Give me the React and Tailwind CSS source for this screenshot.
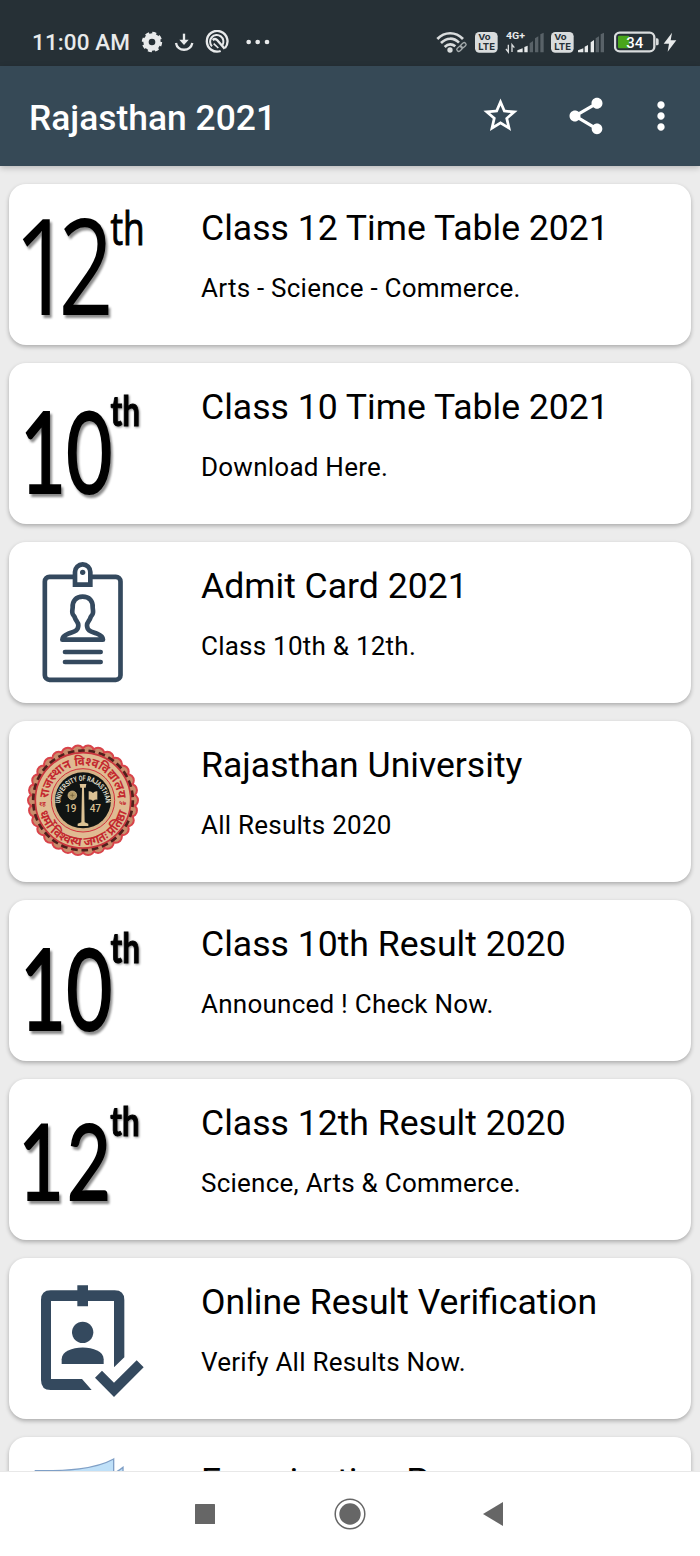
import React from 'react';
import { MdMoreVert, MdShare, MdStarBorder } from 'react-icons/md';

const Glyph = ({ x, y, sx, size, children, font = 'Lato', weight = 400, stroke = 0 }) => (
    <text
        transform={`translate(${x} ${y}) scale(${sx} 1)`}
        fontFamily={`${font}, sans-serif`}
        fontSize={size}
        fontWeight={weight}
        stroke="#000"
        strokeWidth={stroke}
    >
        {children}
    </text>
);

const TwelfthThin = () => (
    <svg viewBox="0 0 150 161" className="w-[150px] h-[161px] shrink-0">
        <g className="drop-shadow-[2px_3px_1px_rgba(0,0,0,0.45)]">
            <Glyph x={4.5} y={131} sx={0.77} size={134} font="Open Sans">1</Glyph>
            <Glyph x={49.6} y={131} sx={0.72} size={134} font="Open Sans">2</Glyph>
        </g>
        <Glyph x={101.4} y={60.5} sx={0.76} size={46.5} font="Open Sans" stroke={1}>th</Glyph>
    </svg>
);

const Tenth = () => (
    <svg viewBox="0 0 150 161" className="w-[150px] h-[161px] shrink-0">
        <g className="drop-shadow-[2px_3px_1px_rgba(0,0,0,0.45)]">
            <Glyph x={11} y={130} sx={0.71} size={112} stroke={2}>1</Glyph>
            <Glyph x={57.2} y={130} sx={0.71} size={112} stroke={2}>0</Glyph>
        </g>
        <g className="drop-shadow-[1px_1px_1px_rgba(0,0,0,0.45)]">
            <Glyph x={101.5} y={63} sx={0.74} size={42.5} weight={700} stroke={1}>th</Glyph>
        </g>
    </svg>
);

const TwelfthBold = () => (
    <svg viewBox="0 0 150 161" className="w-[150px] h-[161px] shrink-0">
        <g className="drop-shadow-[2px_3px_1px_rgba(0,0,0,0.45)]">
            <Glyph x={9.3} y={121} sx={0.75} size={105} stroke={2}>1</Glyph>
            <Glyph x={58} y={121} sx={0.72} size={105} stroke={2}>2</Glyph>
        </g>
        <g className="drop-shadow-[1px_1px_1px_rgba(0,0,0,0.45)]">
            <Glyph x={101.3} y={57} sx={0.77} size={40.5} weight={700} stroke={1}>th</Glyph>
        </g>
    </svg>
);

const AdmitCard = () => (
    <svg viewBox="27 6 450 483" className="w-[150px] h-[161px] shrink-0" fill="none" stroke="#34495e" strokeWidth="14" strokeLinejoin="round" strokeLinecap="round">
        <rect x="134.5" y="110.5" width="227" height="309" rx="14" />
        <path d="M225 134V96a23 23 0 0 1 46 0v38z" fill="#fff" strokeLinejoin="miter" />
        <circle cx="248" cy="97" r="8" fill="#34495e" stroke="none" />
        <path d="M248 170c-20 0-31 13-30 32 0 6-2 8-1 16 1 8 6 9 8 16 2 8 10 12 10 22 0 18-14 19-30 25-12 5-18 9-18 18h122c0-9-6-13-18-18-16-6-30-7-30-25 0-10 8-14 10-22 2-7 7-8 8-16 1-8-1-10-1-16 1-19-10-32-30-32z" />
        <path d="M195 336h107M195 366h107" />
    </svg>
);

const VerifyCard = () => (
    <svg viewBox="27 -6 450 483" className="w-[150px] h-[161px] shrink-0" fill="#34495e">
        <path d="M152 91H232V76H264V91H344Q373 91 373 120V292L342 322V123H264V139H232V123H153V357H246L275 390H152Q123 390 123 360V120Q123 91 152 91Z" />
        <circle cx="248" cy="217" r="32" />
        <path d="M185 312V298C185 251 311 251 311 298V312Z" />
        <path d="M285 353L306 332L342 368L410 301L431 322L342 411Z" />
    </svg>
);

const petals = Array.from({ length: 30 }, (_, i) => (i * Math.PI) / 15);

const Seal = () => (
    <svg viewBox="-17 -42 450 483" className="w-[150px] h-[161px] shrink-0">
        <defs>
            <path id="seal-top" d="M101 196A104 104 0 0 1 309 196" />
            <path id="seal-bottom" d="M70 198A135 135 0 0 0 340 198" />
            <path id="seal-name" d="M137 205A68 68 0 0 1 273 205" />
        </defs>
        {petals.map((a, i) => (
            <circle key={i} cx={205 + 146 * Math.cos(a)} cy={196 + 146 * Math.sin(a)} r="19" fill="#c98d6c" stroke="#d9434a" strokeWidth="6" />
        ))}
        <circle cx="205" cy="196" r="149" fill="none" stroke="#4f211c" strokeWidth="9" strokeDasharray="20 11.2" />
        <circle cx="205" cy="196" r="143" fill="#e0bb92" stroke="#c9363e" strokeWidth="5" />
        <circle cx="205" cy="196" r="95" fill="#d6b286" stroke="#d3303c" strokeWidth="3" />
        <circle cx="205" cy="196" r="84" fill="#101413" />
        <g fill="#c4282f" fontFamily='"Noto Sans", "Noto Sans Devanagari", sans-serif' fontWeight="700" fontSize="38">
            <text><textPath href="#seal-top" startOffset="6" textLength="315" lengthAdjust="spacingAndGlyphs">राजस्थान विश्वविद्यालय</textPath></text>
            <text><textPath href="#seal-bottom" startOffset="34" textLength="356" lengthAdjust="spacingAndGlyphs">धर्मो विश्वस्य जगतः प्रतिष्ठा</textPath></text>
            <text x="73" y="214" fontSize="18">१ह</text>
            <text x="314" y="210" fontSize="18">५७</text>
        </g>
        <text fill="#e8e2d4" fontFamily="Roboto, sans-serif" fontWeight="700" fontSize="22">
            <textPath href="#seal-name" textLength="212" lengthAdjust="spacingAndGlyphs">UNIVERSITY OF RAJASTHAN</textPath>
        </text>
        <g fill="#dcc294">
            <path d="M195 147h20l-2 11h-5l2 104 11 4v7h-32v-7l11-4 2-104h-5z" />
            <circle cx="173" cy="181" r="13" fill="#b39c67" stroke="#dcc294" strokeWidth="2" />
            <path d="M167 181h12M173 175v12" stroke="#6c5b38" strokeWidth="2" />
            <path d="M222 169q7-2 13 5 6-7 13-5v25q-7-1-13 4-6-5-13-4z" />
            <g fontFamily="Roboto, sans-serif" fontSize="30" fontWeight="500">
                <text x="151" y="230">19</text>
                <text x="225" y="230">47</text>
            </g>
        </g>
    </svg>
);

const Papers = () => (
    <svg viewBox="27 81 450 483" className="w-[150px] h-[161px] shrink-0" fill="#bfe0f8" stroke="#7f9fc6" strokeWidth="4">
        <path d="M340 190Q356 183 369 172V300H330z" />
        <path d="M106 182C200 183 285 178 341 147V300H106z" />
    </svg>
);

const items = [
    { title: 'Class 12 Time Table 2021', text: 'Arts - Science - Commerce.', Icon: TwelfthThin },
    { title: 'Class 10 Time Table 2021', text: 'Download Here.', Icon: Tenth },
    { title: 'Admit Card 2021', text: 'Class 10th & 12th.', Icon: AdmitCard },
    { title: 'Rajasthan University', text: 'All Results 2020', Icon: Seal },
    { title: 'Class 10th Result 2020', text: 'Announced ! Check Now.', Icon: Tenth },
    { title: 'Class 12th Result 2020', text: 'Science, Arts & Commerce.', Icon: TwelfthBold },
    { title: 'Online Result Verification', text: 'Verify All Results Now.', Icon: VerifyCard },
    { title: 'Examination Paper', text: '', Icon: Papers },
];

const Volte = () => (
    <svg viewBox="0 92 69 69" className="w-[23px] h-[23px]">
        <rect x="0" y="95" width="68" height="62" rx="13" fill="#d9dcdd" />
        <g fill="#263036" fontFamily="Inter, sans-serif" fontWeight="700">
            <text x="10" y="120" fontSize="24" textLength="37" lengthAdjust="spacingAndGlyphs">Vo</text>
            <text x="10" y="148" fontSize="28" textLength="50" lengthAdjust="spacingAndGlyphs">LTE</text>
        </g>
    </svg>
);

const StatusBar = () => (
    <div className="h-[66px] shrink-0 bg-[#263036] flex items-center justify-between pl-[32px] pr-[23px] pt-[18px] text-[#e8eaeb]">
        <div className="flex items-center">
            <span className="w-[109px] text-[22.5px] leading-[24px] font-medium tracking-[0.1px]">11:00 AM</span>
            <svg viewBox="423 92 66 66" className="w-[22px] h-[22px]">
                <circle cx="456" cy="125" r="18" fill="none" stroke="#e8eaeb" strokeWidth="16" />
                <circle cx="456" cy="125" r="27" fill="none" stroke="#e8eaeb" strokeWidth="7" strokeDasharray="12 9.2" />
            </svg>
            <svg viewBox="522 92 60 66" className="ml-[11px] w-[20px] h-[22px]" fill="none" stroke="#e8eaeb" strokeWidth="7">
                <path d="M552 100v24" />
                <path d="M538 118h28l-14 16z" fill="#e8eaeb" stroke="none" />
                <path d="M528 128c4 27 44 27 49 0" />
            </svg>
            <svg viewBox="615 90 72 72" className="ml-[11px] w-[24px] h-[24px]" fill="none" stroke="#e8eaeb" strokeWidth="6">
                <path d="M675 144A31 31 0 1 0 662 153" strokeWidth="7" />
                <path d="M636 139a20 20 0 1 1 31-3" />
                <path d="M638 120q8-6 14 1l22 25" strokeWidth="7" />
                <path d="M641 131l14 13" strokeWidth="5" />
            </svg>
            <svg viewBox="735 92 78 66" className="ml-[16px] w-[26px] h-[22px]" fill="#e8eaeb">
                <circle cx="746" cy="125" r="7" />
                <circle cx="773" cy="125" r="7" />
                <circle cx="801" cy="125" r="7" />
            </svg>
        </div>
        <div className="flex items-center">
            <svg viewBox="48 92 96 69" className="w-[32px] h-[23px]" fill="none" stroke="#d9dcdd" strokeWidth="8">
                <path d="M52 116C74 93 107 93 129 116M63 128C80 111 101 111 117 127M74 140C84 130 96 130 106 138" />
                <circle cx="90" cy="149" r="8" fill="#d9dcdd" stroke="none" />
                <g stroke="#a3a9ab" strokeWidth="4" transform="rotate(-42 125 140)">
                    <rect x="108" y="134" width="18" height="11" rx="5" />
                    <rect x="123" y="134" width="18" height="11" rx="5" />
                </g>
            </svg>
            <div className="ml-[7px]"><Volte /></div>
            <svg viewBox="255 89 120 69" className="ml-[7px] w-[40px] h-[23px]">
                <text x="258" y="112" fill="#e8eaeb" fontFamily="Roboto, sans-serif" fontWeight="700" fontSize="29" textLength="57" lengthAdjust="spacingAndGlyphs">4G+</text>
                <path d="M265 130v22l-7-9M276 152v-22l7 9" fill="none" stroke="#d9dcdd" strokeWidth="4" />
                <path d="M292 147l16-6v12h-16zM313 137l10-4v20h-10z" fill="#e8eaeb" />
                <path d="M329 126l10-7v34h-10zM345 111l10-6v48h-10zM361 99l10-5v59h-10z" fill="#596268" />
            </svg>
            <div className="ml-[6px]"><Volte /></div>
            <svg viewBox="474 89 78 69" className="ml-[4px] w-[26px] h-[23px]">
                <path d="M474 147l16-6v12h-16zM494 136l10-5v22h-10zM512 123l10-7v37h-10z" fill="#e8eaeb" />
                <path d="M527 111l10-6v48h-10zM542 99l10-5v59h-10z" fill="#596268" />
            </svg>
            <svg viewBox="582 92 135 66" className="ml-[10px] w-[45px] h-[22px]">
                <rect x="585" y="97" width="118" height="56" rx="14" fill="none" stroke="#d9dcdd" strokeWidth="7" />
                <rect x="594" y="106" width="34" height="38" rx="4" fill="#49a51b" />
                <path d="M708 114h3q5 0 5 5v11q0 5-5 5h-3z" fill="#d9dcdd" />
                <text x="619" y="142" fill="#fff" fontFamily="Roboto, sans-serif" fontWeight="500" fontSize="43" textLength="51" lengthAdjust="spacingAndGlyphs">34</text>
            </svg>
            <svg viewBox="729 92 42 66" className="ml-[4px] w-[14px] h-[22px]" fill="#e8eaeb">
                <path d="M756 97L731 130H747L743 154L769 120H752z" />
            </svg>
        </div>
    </div>
);

const AppBar = () => (
    <header className="relative z-10 h-[99.5px] shrink-0 bg-[#364956] text-white flex items-center pl-[29px] pr-[17.5px] shadow-[0_2px_6px_rgba(0,0,0,0.22)]">
        <h1 className="flex-1 pt-[5px] text-[35.4px] leading-[42px] font-medium">Rajasthan 2021</h1>
        <MdStarBorder size={41} />
        <MdShare size={44} className="ml-[43px]" />
        <MdMoreVert size={44} className="ml-[31px]" />
    </header>
);

const Card = ({ title, text, Icon }) => (
    <div className="h-[161px] shrink-0 flex bg-white rounded-[17px] shadow-[0_2px_4px_rgba(0,0,0,0.28)] text-black">
        <Icon />
        <div className="pl-[42px] pt-[23px] whitespace-nowrap">
            <h2 className="text-[35.6px] leading-[42px] font-normal">{title}</h2>
            <p className="mt-[24px] text-[26px] leading-[30px] tracking-[0.24px]">{text}</p>
        </div>
    </div>
);

const NavBar = () => (
    <nav className="relative z-10 h-[85px] shrink-0 bg-white border-t border-[#e8e8e8] flex items-center justify-center pr-[2px] text-[#666]">
        <svg viewBox="0 0 20 20" className="w-[20px] h-[20px]" fill="currentColor">
            <rect width="20" height="20" rx="0.5" />
        </svg>
        <svg viewBox="0 0 32 32" className="ml-[119px] w-[32px] h-[32px]" fill="currentColor">
            <circle cx="16" cy="16" r="14.8" fill="none" stroke="currentColor" strokeWidth="1.5" />
            <circle cx="16" cy="16" r="10.7" />
        </svg>
        <svg viewBox="0 0 20 24" className="ml-[117px] w-[20px] h-[24px]" fill="currentColor">
            <path d="M0 12L20 0V24z" />
        </svg>
    </nav>
);

const App = () => {
    return (
        <div className="w-[700px] h-[1556px] flex flex-col overflow-hidden bg-[#ececec] font-['Roboto',sans-serif]">
            <StatusBar />
            <AppBar />
            <main className="flex-1 min-h-0 overflow-hidden flex flex-col gap-[18px] px-[9px] pt-[18.5px]">
                {items.map((item) => (
                    <Card key={item.title} {...item} />
                ))}
            </main>
            <NavBar />
        </div>
    );
};

export default App;
